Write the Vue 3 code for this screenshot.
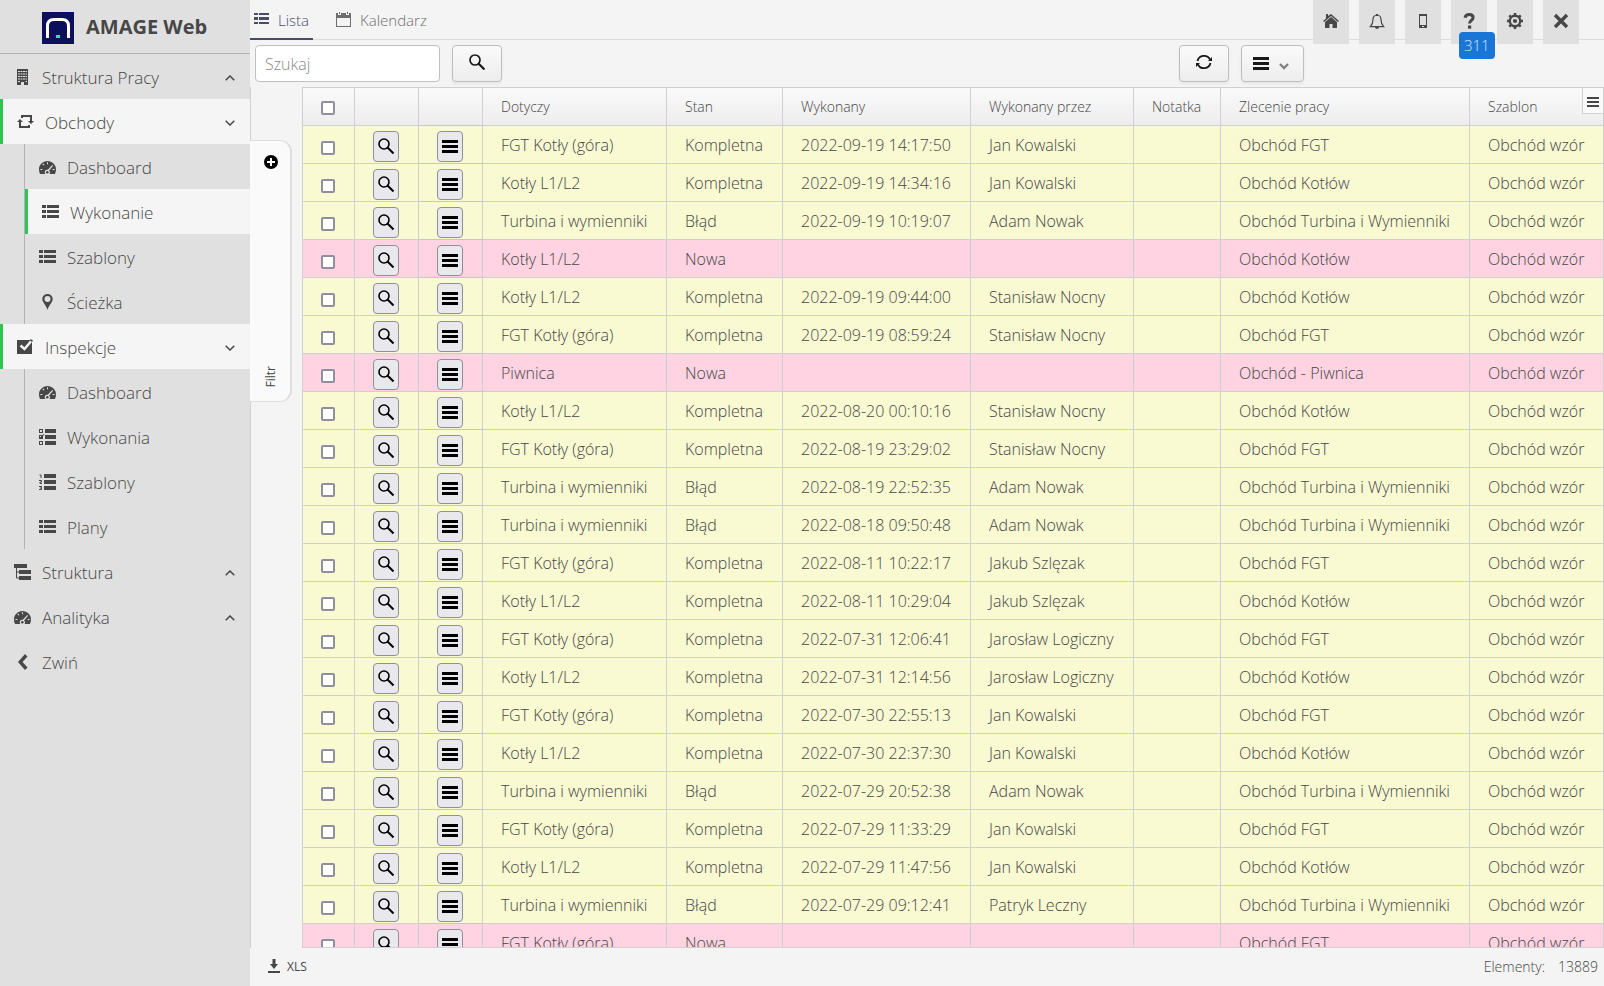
<script setup>
import { ref } from 'vue'

const search = ref('')

const menu = [
  { label: 'Struktura Pracy', icon: 'building', arrow: 'up' },
  {
    label: 'Obchody', icon: 'retweet', arrow: 'down', active: true,
    children: [
      { label: 'Dashboard', icon: 'gauge' },
      { label: 'Wykonanie', icon: 'list', active: true },
      { label: 'Szablony', icon: 'list' },
      { label: 'Ścieżka', icon: 'pin' },
    ],
  },
  {
    label: 'Inspekcje', icon: 'check', arrow: 'down', active: true,
    children: [
      { label: 'Dashboard', icon: 'gauge' },
      { label: 'Wykonania', icon: 'tasks' },
      { label: 'Szablony', icon: 'numbers' },
      { label: 'Plany', icon: 'list' },
    ],
  },
  { label: 'Struktura', icon: 'tree', arrow: 'up' },
  { label: 'Analityka', icon: 'gauge', arrow: 'up' },
  { label: 'Zwiń', icon: 'left' },
]

const icons = {
  building: '<path d="M3 0h11v16h-4v-3H7v3H3z"/><path d="M4 2h2v1H4zm2.500 0h2v1h-2zM9 2h2v1H9zm2.500 0H13v1h-1.500zM4 4.500h2v1H4zm2.500 0h2v1h-2zm2.500 0h2v1H9zm2.500 0H13v1h-1.500zM4 7h2v1H4zm2.500 0h2v1h-2zM9 7h2v1H9zm2.500 0H13v1h-1.500zM4 9.500h2v1H4zm2.500 0h2v1h-2zm2.500 0h2v1H9zm2.500 0H13v1h-1.500zM4 12h2v1H4zm7.500 0H13v1h-1.500z" fill="#e0e0e0"/>',
  retweet: '<path d="M4 1h11v6h2l-3 3-3-3h2V3H6v1H4zM13 14H2V8H0l3-3 3 3H4v4h7v-1h2z"/>',
  gauge: '<path fill-rule="evenodd" d="M8.500 2C3.800 2 0 5.700 0 10.300 0 12 .3 13.500 1 15h5.400a2.600 2.600 0 0 1 1.300-4.300c.4 0 .8 0 1.100.1L13.300 6l.8.8-4 4.700A2.600 2.600 0 0 1 10.600 15H16c.7-1.500 1-3 1-4.700C17 5.700 13.200 2 8.500 2zM8 3.300h1v2H8zM3.300 5.200l.8-.8 1.300 1.400-.7.7zM1.400 10h2v1h-2zm12.200 0h2v1h-2z"/><circle cx="8.300" cy="13.300" r="1.300"/>',
  list: '<path d="M0 1h4v3H0zm5 0h12v3H5zM0 6h4v3H0zm5 0h12v3H5zM0 11h4v3H0zm5 0h12v3H5z"/>',
  tasks: '<path fill-rule="evenodd" d="M6 0h11v4H6zm0 6h11v4H6zm0 6h11v4H6zM0 0h4v4H0zm1 1v2h2V1zM0 6h4v4H0zm1 1v1h1V7zM0 12h4v4H0zm1 1v2h2v-2z"/><path d="M2 9l3-4" stroke="currentColor"/>',
  numbers: '<path d="M5 0h12v4H5zm0 6h12v4H5zm0 6h12v4H5z"/><path d="M.5 1H2v3M0 6.500h2.500V8H1v1.500h2M0 12.500h2.500v3H0M1 14h1.500" fill="none" stroke="currentColor"/>',
  pin: '<path fill-rule="evenodd" d="M8.500 0C5.500 0 3.300 2.200 3.300 5c0 3.500 3.600 5.500 5.200 11 1.600-5.500 5.200-7.500 5.200-11 0-2.800-2.200-5-5.200-5zm0 2a3 3 0 1 1 0 6 3 3 0 0 1 0-6z"/>',
  check: '<path d="M0 1h15v14H0z"/><path d="M3.500 6.500l4 3.500 8-9.500" fill="none" stroke="#f5f5f5" stroke-width="2.400"/><path d="M13.500 0L16 1.500 15 3l-2-1.500z"/>',
  tree: '<path d="M0 0h13v4H0zM5 6h12v4H5zM5 12h12v4H5z"/><path d="M2.500 4v10H5M2.500 8H5" fill="none" stroke="currentColor"/>',
  left: '<path d="M11 0l2.500 2.500L8.500 8l5 5.500L11 16 4 8z"/>',
}

const tools = [
  { name: 'Start', icon: '<path d="M8 1l8 7-1 1-7-6-7 6-1-1 3-2.600V1h2v2z"/><path d="M8 4l6 5v6H9.500v-4h-3v4H2V9z"/>' },
  { name: 'Powiadomienia', icon: '<path d="M8 2c-2.600 0-4 2-4 4.500 0 3.500-.6 5-2.700 7.200h13.400C12.600 11.500 12 10 12 6.500 12 4 10.600 2 8 2z" fill="none" stroke="currentColor" stroke-width="1.200"/><path d="M7 1h2v2H7zM6 14h4a2 2 0 0 1-4 0z"/>' },
  { name: 'Urządzenie', icon: '<path fill-rule="evenodd" d="M4 1h8v14H4zm1 2v9h6V3zm2 10v1h2v-1z"/>' },
  { name: 'Pomoc', badge: '311', icon: '<path d="M4 4.800C4.500 2.400 6 1.500 8.300 1.500c2.300 0 3.800 1 3.800 3 0 3-3.600 2.700-3.600 6" fill="none" stroke="currentColor" stroke-width="3"/><path d="M7 12.500h3.200v3.200H7z"/>' },
  { name: 'Ustawienia', icon: '<circle cx="8" cy="8" r="5.200" fill="none" stroke="currentColor" stroke-width="2.400"/><circle cx="8" cy="8" r="2.100"/><path d="M8 0v3M8 13v3M0 8h3M13 8h3M2.300 2.300l2 2M11.700 11.700l2 2M13.700 2.300l-2 2M2.300 13.700l2-2" stroke="currentColor" stroke-width="2.600"/>' },
  { name: 'Zamknij', icon: '<path d="M2 2l12 12M14 2L2 14" stroke="currentColor" stroke-width="3.400"/>' },
]

const columns = ['Dotyczy', 'Stan', 'Wykonany', 'Wykonany przez', 'Notatka', 'Zlecenie pracy', 'Szablon']

const F = 'FGT Kotły (góra)'
const K = 'Kotły L1/L2'
const T = 'Turbina i wymienniki'
const orders = { [F]: 'Obchód FGT', [K]: 'Obchód Kotłów', [T]: 'Obchód Turbina i Wymienniki', Piwnica: 'Obchód - Piwnica' }

const rows = [
  [F, 'Kompletna', '2022-09-19 14:17:50', 'Jan Kowalski'],
  [K, 'Kompletna', '2022-09-19 14:34:16', 'Jan Kowalski'],
  [T, 'Błąd', '2022-09-19 10:19:07', 'Adam Nowak'],
  [K, 'Nowa', '', ''],
  [K, 'Kompletna', '2022-09-19 09:44:00', 'Stanisław Nocny'],
  [F, 'Kompletna', '2022-09-19 08:59:24', 'Stanisław Nocny'],
  ['Piwnica', 'Nowa', '', ''],
  [K, 'Kompletna', '2022-08-20 00:10:16', 'Stanisław Nocny'],
  [F, 'Kompletna', '2022-08-19 23:29:02', 'Stanisław Nocny'],
  [T, 'Błąd', '2022-08-19 22:52:35', 'Adam Nowak'],
  [T, 'Błąd', '2022-08-18 09:50:48', 'Adam Nowak'],
  [F, 'Kompletna', '2022-08-11 10:22:17', 'Jakub Szlęzak'],
  [K, 'Kompletna', '2022-08-11 10:29:04', 'Jakub Szlęzak'],
  [F, 'Kompletna', '2022-07-31 12:06:41', 'Jarosław Logiczny'],
  [K, 'Kompletna', '2022-07-31 12:14:56', 'Jarosław Logiczny'],
  [F, 'Kompletna', '2022-07-30 22:55:13', 'Jan Kowalski'],
  [K, 'Kompletna', '2022-07-30 22:37:30', 'Jan Kowalski'],
  [T, 'Błąd', '2022-07-29 20:52:38', 'Adam Nowak'],
  [F, 'Kompletna', '2022-07-29 11:33:29', 'Jan Kowalski'],
  [K, 'Kompletna', '2022-07-29 11:47:56', 'Jan Kowalski'],
  [T, 'Błąd', '2022-07-29 09:12:41', 'Patryk Leczny'],
  [F, 'Nowa', '', ''],
]
</script>

<template>
  <div class="app">
    <aside class="sidebar">
      <header class="brand">
        <svg class="logo" viewBox="0 0 32 32" aria-hidden="true">
          <path fill="#0b0f5c" d="M0 0h32v32H0z" />
          <path d="M5.500 26V14q0-6.500 6.500-6.500h8q6.500 0 6.500 6.500v12" fill="none" stroke="#fff" stroke-width="3" />
          <path fill="#1de9b6" d="M14 23h4v3h-4z" />
        </svg>
        <span>AMAGE Web</span>
      </header>
      <nav>
        <template v-for="item in menu" :key="item.label">
          <a href="#" class="item" :class="{ active: item.active }">
            <svg class="icon" viewBox="0 0 17 16" aria-hidden="true" v-html="icons[item.icon]" />
            <span>{{ item.label }}</span>
            <svg v-if="item.arrow" class="arrow" :class="item.arrow" viewBox="0 0 10 6" aria-hidden="true">
              <path d="M.7 5.300L5 1l4.300 4.300" />
            </svg>
          </a>
          <div v-if="item.children" class="submenu">
            <a v-for="child in item.children" :key="child.label" href="#" class="item" :class="{ active: child.active }">
              <svg class="icon" viewBox="0 0 17 16" aria-hidden="true" v-html="icons[child.icon]" />
              <span>{{ child.label }}</span>
            </a>
          </div>
        </template>
      </nav>
    </aside>

    <main class="main">
      <header class="topbar">
        <nav class="tabs">
          <a href="#" class="tab selected">
            <svg class="tab-icon" viewBox="0 0 15 16" aria-hidden="true">
              <path d="M0 2h4v2H0zm5 0h10v2H5zM0 6h4v3H0zm5 0h10v3H5zM0 11h4v2H0zm5 0h10v2H5z" />
            </svg>
            <span>Lista</span>
          </a>
          <a href="#" class="tab">
            <svg class="tab-icon" viewBox="0 0 15 16" aria-hidden="true">
              <path fill-rule="evenodd" d="M0 2h2v2h3V2h5v2h3V2h2v14H0zm1 5v8h13V7zM3 1h1v2H3zm8 0h1v2h-1z" />
            </svg>
            <span>Kalendarz</span>
          </a>
        </nav>
        <div class="tools">
          <button v-for="tool in tools" :key="tool.name" type="button" class="tool" :aria-label="tool.name">
            <svg viewBox="0 0 16 16" aria-hidden="true" v-html="tool.icon" />
            <span v-if="tool.badge" class="badge">{{ tool.badge }}</span>
          </button>
        </div>
      </header>

      <div class="toolbar">
        <input v-model="search" class="search" type="text" placeholder="Szukaj" aria-label="Szukaj">
        <button type="button" class="button" aria-label="Wyszukaj">
          <svg viewBox="0 0 16 16" aria-hidden="true">
            <circle cx="6" cy="6" r="5" fill="none" stroke="currentColor" stroke-width="1.700" />
            <path d="M9.500 9.500l6 6" stroke="currentColor" stroke-width="2.200" />
          </svg>
        </button>
        <div class="actions">
          <button type="button" class="button" aria-label="Odśwież">
            <svg viewBox="0 0 16 16" aria-hidden="true">
              <path d="M1.500 7A6.700 6.700 0 0 1 14 5.500M14.500 9A6.700 6.700 0 0 1 2 10.500" fill="none" stroke="currentColor" stroke-width="1.800" />
              <path d="M16 3v4h-4zM0 13V9h4z" />
            </svg>
          </button>
          <button type="button" class="button menu-button" aria-label="Menu">
            <svg viewBox="0 0 16 16" aria-hidden="true"><path d="M0 2h16v3H0zm0 5h16v3H0zm0 5h16v3H0z" /></svg>
            <svg class="caret" viewBox="0 0 10 7" aria-hidden="true">
              <path d="M1 1l4 4 4-4" fill="none" stroke="currentColor" stroke-width="2.400" />
            </svg>
          </button>
        </div>
      </div>

      <div class="content">
        <div class="filter-pane">
          <button type="button" class="filter">
            <svg viewBox="0 0 14 14" aria-hidden="true">
              <circle cx="7" cy="7" r="7" />
              <path d="M7 3v8M3 7h8" stroke="#fff" stroke-width="2" />
            </svg>
            <span>Filtr</span>
          </button>
        </div>
        <div class="grid">
          <table>
            <colgroup>
              <col class="c-check"><col class="c-action"><col class="c-action">
              <col class="c-subject"><col class="c-state"><col class="c-date"><col class="c-person">
              <col class="c-note"><col class="c-order"><col>
            </colgroup>
            <thead>
              <tr>
                <th class="center"><input type="checkbox" class="box" aria-label="Zaznacz wszystko"></th>
                <th></th>
                <th class="frozen"></th>
                <th v-for="column in columns" :key="column">{{ column }}</th>
              </tr>
            </thead>
            <tbody>
              <tr v-for="(row, i) in rows" :key="i" :class="{ fresh: row[1] === 'Nowa' }">
                <td class="center"><input type="checkbox" class="box" :aria-label="'Zaznacz ' + row[0]"></td>
                <td class="center">
                  <button type="button" class="mini" aria-label="Szczegóły">
                    <svg viewBox="0 0 16 16" aria-hidden="true">
                      <circle cx="6" cy="6" r="5" fill="none" stroke="currentColor" stroke-width="1.600" />
                      <path d="M9.500 9.500l6 6" stroke="currentColor" stroke-width="2" />
                    </svg>
                  </button>
                </td>
                <td class="center frozen">
                  <button type="button" class="mini" aria-label="Akcje">
                    <svg viewBox="0 0 16 16" aria-hidden="true"><path d="M0 2h16v3H0zm0 5h16v3H0zm0 5h16v3H0z" /></svg>
                  </button>
                </td>
                <td>{{ row[0] }}</td>
                <td>{{ row[1] }}</td>
                <td>{{ row[2] }}</td>
                <td>{{ row[3] }}</td>
                <td></td>
                <td>{{ orders[row[0]] }}</td>
                <td>Obchód wzór</td>
              </tr>
            </tbody>
          </table>
          <button type="button" class="columns" aria-label="Kolumny">
            <svg viewBox="0 0 12 10" aria-hidden="true"><path d="M0 0h12v2H0zm0 4h12v2H0zm0 4h12v2H0z" /></svg>
          </button>
        </div>
      </div>

      <footer class="footer">
        <button type="button" class="export">
          <svg viewBox="0 0 12 14" aria-hidden="true"><path d="M4.500 0h3v5H10l-4 5-4-5h2.500zM0 12h12v2H0z" /></svg>
          <span>XLS</span>
        </button>
        <span class="count"><span>Elementy:</span><span>13889</span></span>
      </footer>
    </main>
  </div>
</template>

<style>
body {
  margin: 0;
}
</style>

<style scoped>
.app {
  display: flex;
  height: 100vh;
  overflow: hidden;
  background: #f4f4f4;
  color: #474747;
  font: 300 16px/24px "Open Sans", "Noto Sans", sans-serif;
}
.app * {
  box-sizing: border-box;
}
button,
input {
  font: inherit;
  color: inherit;
}
button {
  padding: 0;
  cursor: pointer;
}
svg {
  display: block;
  flex: none;
  fill: currentColor;
}
a {
  color: inherit;
  text-decoration: none;
}
.sidebar {
  flex: none;
  width: 250px;
  background: #e0e0e0;
}
.brand {
  display: flex;
  align-items: center;
  gap: 12px;
  height: 54px;
  padding: 2px 0 0 42px;
  border-bottom: 1px solid #b3b3b3;
  font-size: 20px;
  font-weight: 700;
}
.brand span {
  padding-bottom: 2px;
}
.logo {
  width: 32px;
  height: 32px;
}
.item {
  display: flex;
  align-items: center;
  height: 45px;
  padding: 2px 15px 0 14px;
  font-size: 17px;
}
.icon {
  width: 17px;
  height: 16px;
  margin: 0 11px 2px 0;
}
.arrow {
  width: 10px;
  height: 6px;
  margin-left: auto;
  fill: none;
  stroke: currentColor;
  stroke-width: 1.5;
}
.arrow.down {
  transform: rotate(180deg);
}
.item.active {
  border-left: 3px solid #2dc653;
  background: #f5f5f5;
}
.submenu {
  margin-left: 24px;
  border-left: 1px solid #b3b3b3;
}
.main {
  display: flex;
  flex: 1;
  flex-direction: column;
  min-width: 0;
}
.topbar {
  display: flex;
  justify-content: space-between;
  height: 40px;
  padding-right: 25px;
  border-bottom: 1px solid #dcdcdc;
}
.tabs {
  display: flex;
  gap: 19px;
}
.tab {
  display: flex;
  gap: 9px;
  height: 40px;
  padding: 8px 4px 0;
  color: #6e6e6e;
  font-size: 15px;
}
.tab.selected {
  border-bottom: 2px solid #4b4b6a;
  color: #4b4b6a;
}
.tab-icon {
  width: 15px;
  height: 16px;
  margin-top: 3px;
}
.tools {
  display: flex;
  gap: 10px;
}
.tool {
  position: relative;
  width: 36px;
  height: 44px;
  border: 0;
  background: #e0e0e0;
}
.tool svg {
  width: 16px;
  height: 16px;
  margin: 0 auto 2px;
}
.badge {
  position: absolute;
  top: 32px;
  left: 8px;
  z-index: 1;
  padding: 0 5px;
  border-radius: 4px;
  background: #1976d7;
  color: #cfe3f7;
  font-size: 15px;
  line-height: 27px;
}
.toolbar {
  display: flex;
  gap: 12px;
  height: 47px;
  padding: 5px 300px 5px 5px;
}
.search {
  width: 185px;
  padding: 0 9px;
  border: 1px solid #c0c0c0;
  border-radius: 4px;
  outline: 0;
  background: #fff;
}
.search::placeholder {
  color: #8a8a8a;
  opacity: 1;
}
.button {
  display: flex;
  align-items: center;
  justify-content: center;
  width: 50px;
  border: 1px solid #bebebe;
  border-radius: 4px;
  background: linear-gradient(#fafafa, #ededed);
  box-shadow: 0 2px 3px rgba(0, 0, 0, 0.06);
  color: #191919;
}
.button svg {
  width: 16px;
  height: 16px;
  margin-bottom: 4px;
}
.actions {
  display: flex;
  gap: 12px;
  margin-left: auto;
}
.menu-button {
  gap: 10px;
  width: 63px;
  padding-right: 4px;
}
.menu-button svg {
  margin-bottom: 2px;
}
.button .caret {
  width: 10px;
  height: 7px;
  margin: 5px 0 0;
  color: #808080;
}
.content {
  display: flex;
  flex: 1;
  min-height: 0;
}
.filter-pane {
  flex: none;
  width: 52px;
  padding-top: 53px;
  border-left: 1px solid #d0d0d0;
}
.filter {
  display: flex;
  flex-direction: column;
  align-items: center;
  justify-content: space-between;
  width: 42px;
  height: 262px;
  margin-left: -1px;
  padding: 14px 0 14px 2px;
  border: 1px solid #dedede;
  border-width: 1px 2px 1px 0;
  border-radius: 0 12px 12px 0;
  background: #fafafa;
}
.filter svg {
  width: 14px;
  height: 14px;
  color: #000;
}
.filter span {
  writing-mode: vertical-rl;
  transform: rotate(180deg);
  font-size: 12px;
  font-weight: 400;
  line-height: 16px;
}
.grid {
  position: relative;
  flex: 1;
  min-width: 0;
  overflow: hidden;
  border: 1px solid #d0d0d0;
}
table {
  width: 100%;
  border-spacing: 0;
  table-layout: fixed;
}
.c-check { width: 52px; }
.c-action { width: 64px; }
.c-subject { width: 184px; }
.c-state { width: 116px; }
.c-date { width: 188px; }
.c-person { width: 163px; }
.c-note { width: 87px; }
.c-order { width: 249px; }
th,
td {
  height: 38px;
  padding: 0 0 0 18px;
  border: 0 solid #d0d0d0;
  border-width: 0 1px 1px 0;
  text-align: left;
  white-space: nowrap;
}
th {
  background: linear-gradient(#fafafa, #ededed);
  font-size: 14px;
  font-weight: 300;
}
td {
  background: #f9f9d2;
}
.fresh td {
  background: #ffd3e1;
}
th:last-child,
td:last-child {
  border-right: 0;
}
.center {
  padding: 4px 2px 0 0;
}
th.center {
  padding-top: 2px;
}
.frozen {
  box-shadow: 1px 0 2px rgba(0, 0, 0, 0.12);
}
.box {
  display: block;
  appearance: none;
  width: 14px;
  height: 14px;
  margin: 0 auto;
  border: 2px solid #8f8f9d;
  border-radius: 2px;
  background: #fff;
}
td .box {
  margin-top: 2px;
}
.mini {
  display: flex;
  align-items: center;
  justify-content: center;
  width: 26px;
  height: 31px;
  margin: 0 auto;
  border: 1px solid #8f8f9d;
  border-radius: 4px;
  background: #e9e9ed;
  color: #000;
}
.mini svg {
  width: 16px;
  height: 16px;
  margin-bottom: 1px;
}
.columns {
  position: absolute;
  top: 0;
  right: 0;
  display: flex;
  align-items: center;
  justify-content: center;
  width: 21px;
  height: 26px;
  border: 1px solid #d0d0d0;
  border-width: 0 0 1px 1px;
  background: #fafafa;
}
.columns svg {
  width: 12px;
  height: 10px;
  margin-top: 2px;
}
.footer {
  display: flex;
  align-items: center;
  justify-content: space-between;
  height: 38px;
  padding: 0 6px 0 18px;
}
.export {
  display: flex;
  align-items: center;
  gap: 7px;
  border: 0;
  background: none;
  font-size: 12px;
  font-weight: 400;
}
.export svg {
  width: 12px;
  height: 14px;
  margin-bottom: 2px;
}
.count {
  display: flex;
  gap: 13px;
  font-size: 14px;
}
</style>
